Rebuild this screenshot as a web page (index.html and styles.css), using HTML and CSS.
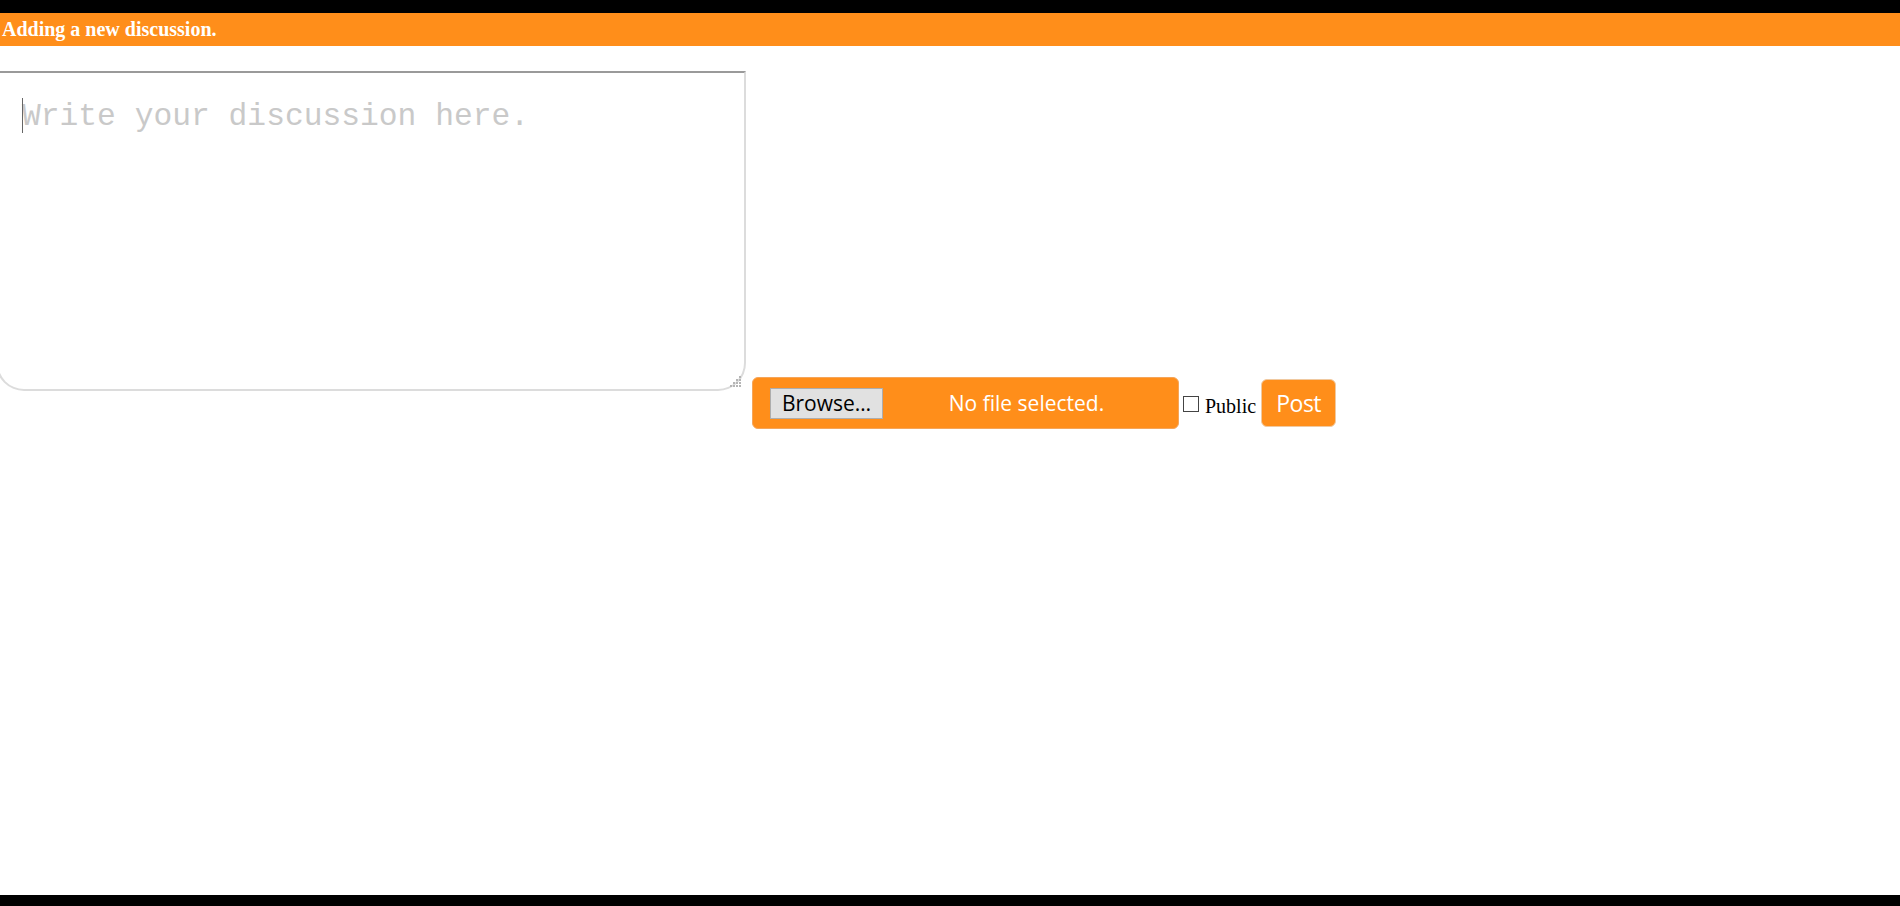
FILE: index.html
```html
<!DOCTYPE html>
<html lang="en">
<head>
<meta charset="utf-8">
<title>Adding a new discussion</title>
<link rel="stylesheet" href="styles.css">
</head>
<body>
<div class="page">
  <div class="topbar"></div>
  <div class="titlebar">Adding a new discussion.</div>
  <div class="main">
    <div class="editor">
      <textarea class="discussion" placeholder="Write your discussion here."></textarea>
      <span class="caret"></span>
      <svg class="grip" width="12" height="12" viewBox="0 0 12 12">
        <g fill="#b5b5b5">
          <rect x="9" y="0" width="2" height="2"/>
          <rect x="6" y="3" width="2" height="2"/><rect x="9" y="3" width="2" height="2"/>
          <rect x="3" y="6" width="2" height="2"/><rect x="6" y="6" width="2" height="2"/><rect x="9" y="6" width="2" height="2"/>
          <rect x="0" y="9" width="2" height="2"/><rect x="3" y="9" width="2" height="2"/><rect x="6" y="9" width="2" height="2"/><rect x="9" y="9" width="2" height="2"/>
        </g>
      </svg>
    </div>
    <div class="controls">
      <div class="filebox">
        <span class="browse">Browse…</span>
        <span class="nofile">No file selected.</span>
      </div>
      <label class="public"><input type="checkbox" class="check"><span>Public</span></label>
      <button class="post">Post</button>
    </div>
  </div>
  <div class="bottombar"></div>
</div>
</body>
</html>
```
FILE: styles.css
```css
html, body {
  margin: 0;
  padding: 0;
  background: #fff;
  overflow: hidden;
}
.page {
  height: 100vh;
  display: flex;
  flex-direction: column;
}
.topbar {
  height: 13px;
  background: #000;
}
.titlebar {
  height: 33px;
  line-height: 32px;
  background: #ff8e1a;
  color: #fff;
  font-family: "Liberation Serif", serif;
  font-weight: bold;
  font-size: 20px;
  padding-left: 2px;
}
.main {
  flex: 1;
  display: flex;
  align-items: flex-start;
  padding-top: 25px;
}
.editor {
  position: relative;
  margin-left: -4px;
  width: 750px;
  height: 320px;
}
.discussion {
  box-sizing: border-box;
  display: block;
  width: 100%;
  height: 100%;
  margin: 0;
  border: 2px solid;
  border-color: #9a9a9a #dcdcdc #dcdcdc #dcdcdc;
  border-radius: 0 0 28px 28px;
  padding: 26px 24px 24px;
  font-family: "Liberation Mono", monospace;
  font-size: 31.3px;
  color: #333;
  resize: none;
  outline: none;
  background: #fff;
}
.discussion::placeholder {
  color: #c9c9c9;
}
.caret {
  position: absolute;
  left: 26px;
  top: 27px;
  width: 1px;
  height: 35px;
  background: #666;
}
.grip {
  position: absolute;
  right: 4px;
  bottom: 3px;
}
.controls {
  display: flex;
  align-items: center;
  margin-top: 306px;
  margin-left: 6px;
}
.filebox {
  box-sizing: border-box;
  width: 427px;
  height: 52px;
  background: #ff8e1a;
  border: 1px solid #f5a55a;
  border-radius: 6px;
  display: flex;
  align-items: center;
  padding-left: 17px;
  font-family: "Open Sans", sans-serif;
  font-size: 21px;
}
.browse {
  box-sizing: border-box;
  width: 113px;
  height: 31px;
  background: #e1e1e1;
  border: 1px solid #adadad;
  color: #000;
  display: flex;
  align-items: center;
  justify-content: center;
}
.nofile {
  flex: 1;
  text-align: center;
  color: #fff;
  padding-right: 8px;
}
.public {
  display: flex;
  align-items: center;
  margin-left: 4px;
  font-family: "Liberation Serif", serif;
  font-size: 20px;
  color: #000;
}
.check {
  appearance: none;
  -webkit-appearance: none;
  box-sizing: border-box;
  width: 16px;
  height: 16px;
  margin: 2px 6px 0 0;
  border: 1px solid #444;
  background: #fff;
  border-radius: 0;
}
.public span {
  margin-top: 7px;
}
.post {
  box-sizing: border-box;
  margin-left: 5px;
  width: 75px;
  height: 48px;
  background: #ff8e1a;
  border: 1px solid #f0c9a0;
  border-radius: 6px;
  color: #fff;
  font-family: "Open Sans", sans-serif;
  font-size: 23px;
  letter-spacing: -0.5px;
  padding: 0;
}
.bottombar {
  height: 11px;
  background: #000;
}
```
